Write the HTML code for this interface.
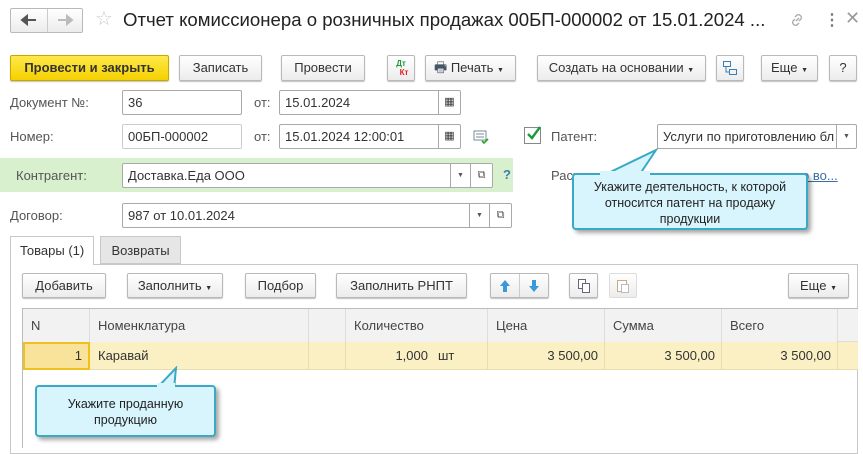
<!DOCTYPE html>
<html><head><meta charset="utf-8"><style>
*{box-sizing:border-box;margin:0;padding:0}
body{width:863px;height:448px;background:#fff;font-family:"Liberation Sans",Arial,sans-serif;font-size:13px;color:#333;position:relative;overflow:hidden}
.a{position:absolute}
.b{position:absolute;border:1px solid #b9b9b9;border-radius:2px;background:linear-gradient(#fff,#ececec);box-shadow:0 1px 1px rgba(0,0,0,.25);text-align:center;line-height:23px;color:#333;white-space:nowrap}
.i{position:absolute;border:1px solid #a9a9a9;border-radius:2px;background:#fff;height:25px;line-height:23px;padding-left:5px;color:#333;white-space:nowrap;overflow:hidden}
.lbl{position:absolute;color:#555}
.cal{position:absolute;border-left:1px solid #a9a9a9;top:0;bottom:0;width:22px;right:0;text-align:center}
.dd{position:absolute;top:0;bottom:0;width:20px;border-left:1px solid #a9a9a9;text-align:center;font-size:7px;color:#555}
.tip{position:absolute;background:#d8f5fd;border:2px solid #3aa9c6;border-radius:4px;box-shadow:3px 3px 4px rgba(0,0,0,.35);text-align:center;color:#222;font-size:12.5px;line-height:16px}
.th{position:absolute;top:0;height:33px;line-height:33px;border-right:1px solid #ddd;padding-left:8px;color:#444;background:#f2f2f2}
.td{position:absolute;top:0;height:28px;line-height:28px;border-right:1px solid #e8ddb0;white-space:nowrap}
</style></head><body>
<!-- title bar -->
<div class="b" style="left:10px;top:8px;width:73px;height:25px;box-shadow:none"></div>
<div class="a" style="left:47px;top:9px;width:1px;height:23px;background:#ccc"></div>
<svg class="a" style="left:20px;top:13px" width="18" height="14"><path d="M2 7h14M2 7l5-4v8z" stroke="#555" stroke-width="2" fill="#555"/></svg>
<svg class="a" style="left:56px;top:13px" width="18" height="14"><path d="M2 7h13M16 7l-5-4v8z" stroke="#bbb" stroke-width="2" fill="#bbb"/></svg>
<div class="a" style="left:95px;top:6px;font-size:20px;color:#ccc">☆</div>
<div class="a" style="left:123px;top:9px;font-size:18.6px;color:#222;white-space:nowrap">Отчет комиссионера о розничных продажах 00БП-000002 от 15.01.2024 ...</div>
<svg class="a" style="left:788px;top:11px" width="18" height="18" viewBox="0 0 18 18" fill="none" stroke="#aaa" stroke-width="1.3"><path d="M8 10l3-3M7 6l2-2a3 3 0 014 4l-2 2M11 12l-2 2a3 3 0 01-4-4l2-2"/></svg>
<div class="a" style="left:824px;top:10px;font-size:16px;color:#777;font-weight:bold">⋮</div>
<div class="a" style="left:845px;top:8px;font-size:18px;color:#999">✕</div>
<!-- toolbar -->
<div class="b" style="left:10px;top:55px;width:159px;height:26px;background:linear-gradient(#ffe94a,#f5d000);border-color:#c9a800;font-weight:bold;color:#333">Провести и закрыть</div>
<div class="b" style="left:179px;top:55px;width:83px;height:26px">Записать</div>
<div class="b" style="left:281px;top:55px;width:84px;height:26px">Провести</div>
<div class="b" style="left:387px;top:55px;width:28px;height:26px;font-size:8px;line-height:9px;padding-top:3px"><span style="color:#1a9a3a;font-weight:bold">Дт</span><br><span style="color:#e02020;font-weight:bold;padding-left:6px">Кт</span></div>
<div class="b" style="left:425px;top:55px;width:91px;height:26px;text-align:left;padding-left:8px"><span style="color:#456;font-size:14px">🖶</span> Печать <span style="font-size:7px">▼</span></div>
<div class="b" style="left:537px;top:55px;width:169px;height:26px">Создать на основании <span style="font-size:7px">▼</span></div>
<div class="b" style="left:716px;top:55px;width:28px;height:26px"><svg width="16" height="16" viewBox="0 0 16 16" style="margin-top:4px" fill="none" stroke="#3a7fb5"><rect x="1.5" y="1.5" width="7" height="5"/><rect x="7.5" y="9.5" width="7" height="5"/><path d="M4 7v5h3"/></svg></div>
<div class="b" style="left:761px;top:55px;width:57px;height:26px">Еще <span style="font-size:7px">▼</span></div>
<div class="b" style="left:829px;top:55px;width:28px;height:26px">?</div>
<!-- row 1 -->
<div class="lbl" style="left:10px;top:95px">Документ №:</div>
<div class="i" style="left:122px;top:90px;width:120px">36</div>
<div class="lbl" style="left:254px;top:95px">от:</div>
<div class="i" style="left:279px;top:90px;width:182px">15.01.2024<div class="cal" style="font-size:11px">▦</div></div>
<!-- row 2 -->
<div class="lbl" style="left:10px;top:129px">Номер:</div>
<div class="i" style="left:122px;top:124px;width:120px;border-color:#ccc">00БП-000002</div>
<div class="lbl" style="left:254px;top:129px">от:</div>
<div class="i" style="left:279px;top:124px;width:182px">15.01.2024 12:00:01<div class="cal" style="font-size:11px">▦</div></div>
<svg class="a" style="left:473px;top:130px" width="16" height="14"><rect x="1" y="1" width="12" height="9" fill="none" stroke="#7a8a9a"/><path d="M3 4h8M3 7h8" stroke="#7a8a9a"/><path d="M9 11l2 2 4-4" stroke="#2a2" stroke-width="1.6" fill="none"/></svg>
<div class="a" style="left:524px;top:127px;width:17px;height:17px;border:1px solid #888;background:#fff"></div>
<svg class="a" style="left:525px;top:125px" width="18" height="18"><path d="M3 9l4 4 8-11" stroke="#1c9a3c" stroke-width="2.4" fill="none"/></svg>
<div class="lbl" style="left:551px;top:129px">Патент:</div>
<div class="i" style="left:657px;top:124px;width:200px;padding-right:20px">Услуги по приготовлению бл<div class="dd" style="right:0">▼</div></div>
<!-- kontragent -->
<div class="a" style="left:0;top:158px;width:513px;height:34px;background:#d8f0cd"></div>
<div class="lbl" style="left:16px;top:168px">Контрагент:</div>
<div class="i" style="left:122px;top:163px;width:371px">Доставка.Еда ООО<div class="dd" style="right:22px">▼</div><div class="dd" style="right:0;width:22px;font-size:11px">⧉</div></div>
<div class="a" style="left:503px;top:167px;color:#3a7fb5;font-weight:bold">?</div>
<div class="lbl" style="left:551px;top:168px">Расч</div>
<div class="a" style="left:795px;top:168px;color:#3a6ea5;text-decoration:underline">по во...</div>
<!-- dogovor -->
<div class="lbl" style="left:10px;top:208px">Договор:</div>
<div class="i" style="left:122px;top:203px;width:390px">987 от 10.01.2024<div class="dd" style="right:22px">▼</div><div class="dd" style="right:0;width:22px;font-size:11px">⧉</div></div>
<!-- tip 1 -->
<svg class="a" style="left:590px;top:148px" width="80" height="30"><path d="M10 29L66 2 48 29" fill="#d8f5fd" stroke="#3aa9c6" stroke-width="2"/></svg>
<div class="tip" style="left:572px;top:173px;width:236px;height:57px;padding-top:4px">Укажите деятельность, к которой<br>относится патент на продажу<br>продукции</div>
<svg class="a" style="left:600px;top:171px" width="50" height="6"><rect x="0" y="0" width="50" height="6" fill="#d8f5fd"/></svg>
<!-- tabs -->
<div class="a" style="left:10px;top:264px;width:848px;height:190px;border:1px solid #c8c8c8"></div>
<div class="a" style="left:10px;top:236px;width:84px;height:29px;border:1px solid #c8c8c8;border-bottom:none;background:#fff;line-height:27px;padding-left:9px;color:#333">Товары (1)</div>
<div class="a" style="left:100px;top:236px;width:81px;height:28px;border:1px solid #c8c8c8;background:#e6e6e6;line-height:27px;text-align:center;color:#333">Возвраты</div>
<!-- table toolbar -->
<div class="b" style="left:22px;top:273px;width:84px;height:25px">Добавить</div>
<div class="b" style="left:127px;top:273px;width:96px;height:25px">Заполнить <span style="font-size:7px">▼</span></div>
<div class="b" style="left:245px;top:273px;width:71px;height:25px">Подбор</div>
<div class="b" style="left:336px;top:273px;width:131px;height:25px">Заполнить РНПТ</div>
<div class="b" style="left:490px;top:273px;width:59px;height:25px"></div>
<div class="a" style="left:519px;top:274px;width:1px;height:23px;background:#ccc"></div>
<svg class="a" style="left:497px;top:278px" width="46" height="16"><path d="M8 2l5 6h-3v6H6V8H3z" fill="#3a9ad9"/><path d="M37 14l5-6h-3V2h-4v6h-3z" fill="#3a9ad9"/></svg>
<div class="b" style="left:569px;top:273px;width:29px;height:25px"><svg width="16" height="16" style="margin-top:4px" fill="#fff" stroke="#667"><rect x="2.5" y="1.5" width="7" height="9"/><rect x="6.5" y="5.5" width="7" height="9"/></svg></div>
<div class="b" style="left:609px;top:273px;width:28px;height:25px;box-shadow:none;border-color:#ddd"><svg width="16" height="16" style="margin-top:4px" fill="#fff" stroke="#c9a88a"><rect x="2.5" y="2.5" width="9" height="11"/><rect x="6.5" y="6.5" width="7" height="8" stroke="#bbb"/></svg></div>
<div class="b" style="left:788px;top:273px;width:61px;height:25px">Еще <span style="font-size:7px">▼</span></div>
<!-- table -->
<div class="a" style="left:22px;top:308px;width:836px;height:140px;border:1px solid #bbb;border-right:none;border-bottom:none;overflow:hidden">
 <div class="a" style="left:0;top:0;width:836px;height:33px;background:#f2f2f2;border-bottom:1px solid #ddd">
  <div class="th" style="left:0;width:67px">N</div>
  <div class="th" style="left:67px;width:219px">Номенклатура</div>
  <div class="th" style="left:286px;width:37px"></div>
  <div class="th" style="left:323px;width:142px">Количество</div>
  <div class="th" style="left:465px;width:117px">Цена</div>
  <div class="th" style="left:582px;width:117px">Сумма</div>
  <div class="th" style="left:699px;width:116px">Всего</div>
 </div>
 <div class="a" style="left:0;top:33px;width:836px;height:28px;background:#fbf0c4;border-bottom:1px solid #e8ddb0">
  <div class="td" style="left:0;width:67px;background:#f9e39a;border:2px solid #f0c020;text-align:right;padding-right:6px;line-height:24px;height:28px">1</div>
  <div class="td" style="left:67px;width:219px;padding-left:8px">Каравай</div>
  <div class="td" style="left:286px;width:37px"></div>
  <div class="td" style="left:323px;width:87px;text-align:right;padding-right:5px;border-right:none">1,000</div>
  <div class="td" style="left:410px;width:55px;padding-left:5px">шт</div>
  <div class="td" style="left:465px;width:117px;text-align:right;padding-right:6px">3 500,00</div>
  <div class="td" style="left:582px;width:117px;text-align:right;padding-right:6px">3 500,00</div>
  <div class="td" style="left:699px;width:116px;text-align:right;padding-right:6px">3 500,00</div>
 </div>
</div>
<!-- tip 2 -->
<svg class="a" style="left:140px;top:366px" width="50" height="24"><path d="M16 23L36 2 34 23" fill="#d8f5fd" stroke="#3aa9c6" stroke-width="2"/></svg>
<div class="tip" style="left:35px;top:385px;width:181px;height:52px;padding-top:9px">Укажите проданную<br>продукцию</div>
<svg class="a" style="left:157px;top:383px" width="18" height="5"><rect width="18" height="5" fill="#d8f5fd"/></svg>
</body></html>
